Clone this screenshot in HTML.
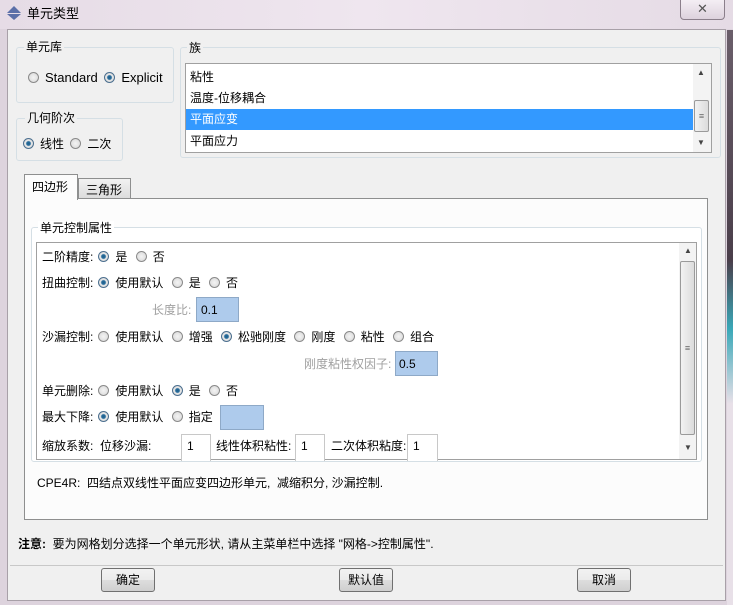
<!DOCTYPE html>
<html><head><meta charset="utf-8"><style>
*{box-sizing:border-box;margin:0;padding:0}
body{width:733px;height:605px;overflow:hidden;background:#ddd3dd;font-family:"Liberation Sans","Noto Sans CJK SC",sans-serif;font-size:12px;color:#000;position:relative}
.a{position:absolute;white-space:nowrap}
.t{position:absolute;white-space:nowrap;line-height:14px}
.r{display:inline-block;width:11px;height:11px;border-radius:50%;border:1px solid #8a8a8a;background:radial-gradient(circle,#f4f4f4 0,#d6d6d6 100%);vertical-align:-1px;margin-right:6px}
.r.on{background:radial-gradient(circle,#1d5f8c 0,#2a6d9c 30%,#e8e8e8 45%,#cfcfcf 100%);border-color:#4b6f8f}
.f{margin-left:5px}
.n{margin-left:5px}
.grp{position:absolute;border:1px solid #d5dfe5;border-radius:3px}
.lbl{position:absolute;background:#f0f0f0;padding:0 2px;line-height:14px}
.box{position:absolute;background:#aecbec;border:1px solid #8ea9c7}
.wbox{position:absolute;background:#fff;border:1px solid #c8c8c8}
.btn{position:absolute;height:24px;border:1px solid #707070;border-radius:3px;background:linear-gradient(#f2f2f2,#ebebeb 50%,#dddddd 51%,#cfcfcf);text-align:center;line-height:22px}
.gray{color:#a0a0a0}
</style></head><body>
<div class="a" style="left:0;top:0;width:733px;height:29px;background:linear-gradient(90deg,#e6dce6,#efe6ef 50%,#e5dbe5)"></div>
<svg class="a" style="left:6px;top:5px" width="16" height="16"><polygon points="8,1 15,8 1,8" fill="#5b6fa8"/><polygon points="8,15 15,9 1,9" fill="#5b6fa8"/></svg>
<div class="t" style="left:27px;top:7px;font-size:13px">单元类型</div>
<div class="a" style="left:680px;top:-1px;width:45px;height:21px;border:1px solid #8b7f8b;border-radius:0 0 4px 4px;background:linear-gradient(#f4eef4,#ddd2dd);text-align:center;line-height:18px;color:#555;font-size:13px">✕</div>
<div class="a" style="left:727px;top:30px;width:6px;height:575px;background:linear-gradient(#6a5e6a,#4a3e4a 40%,#3aa8b8 52%,#e8e0e8 65%)"></div>
<div class="a" style="left:7px;top:29px;width:719px;height:572px;background:#f0f0f0;border:1px solid #a8a0a8"></div>

<div class="grp" style="left:16px;top:47px;width:158px;height:56px"></div>
<div class="lbl" style="left:24px;top:40px">单元库</div>
<div class="t" style="left:28px;top:71px;font-size:13px"><span class="r"></span>Standard <span class="r on" style="margin-left:3px"></span>Explicit</div>
<div class="grp" style="left:16px;top:118px;width:107px;height:43px"></div>
<div class="lbl" style="left:25px;top:111px">几何阶次</div>
<div class="t" style="left:23px;top:137px"><span class="r on"></span>线性 <span class="r" style="margin-left:3px"></span>二次</div>
<div class="grp" style="left:180px;top:47px;width:541px;height:111px"></div>
<div class="lbl" style="left:187px;top:41px">族</div>
<div class="a" style="left:185px;top:63px;width:527px;height:90px;background:#fff;border:1px solid #a0a0a0"></div>
<div class="t" style="left:190px;top:70px">粘性</div>
<div class="t" style="left:190px;top:91px">温度-位移耦合</div>
<div class="a" style="left:186px;top:109px;width:507px;height:21px;background:#3399ff"></div>
<div class="t" style="left:190px;top:112px;color:#fff">平面应变</div>
<div class="t" style="left:190px;top:134px">平面应力</div>
<div class="a" style="left:693px;top:64px;width:18px;height:88px;background:#f3f3f3"></div>
<div class="a" style="left:694px;top:100px;width:15px;height:32px;border:1px solid #9a9a9a;border-radius:2px;background:linear-gradient(90deg,#f2f2f2,#dcdcdc);font-size:9px;text-align:center;line-height:30px;color:#666">≡</div>
<div class="a" style="left:697px;top:68px;font-size:8px;color:#444">▲</div>
<div class="a" style="left:697px;top:138px;font-size:8px;color:#444">▼</div>

<div class="a" style="left:24px;top:198px;width:684px;height:322px;background:#fcfcfc;border:1px solid #8e8f8f"></div>
<div class="a" style="left:78px;top:178px;width:53px;height:21px;border:1px solid #8e8f8f;background:linear-gradient(#f2f2f2,#dcdcdc)"></div>
<div class="t" style="left:86px;top:183px">三角形</div>
<div class="a" style="left:24px;top:174px;width:54px;height:26px;border:1px solid #8e8f8f;border-bottom:none;background:#fcfcfc"></div>
<div class="t" style="left:32px;top:180px">四边形</div>

<div class="grp" style="left:31px;top:227px;width:671px;height:235px;background:#fff"></div>
<div class="lbl" style="left:38px;top:221px;background:#fff">单元控制属性</div>
<div class="a" style="left:36px;top:242px;width:661px;height:218px;border:1px solid #a0a0a0;background:#fff"></div>
<div class="a" style="left:679px;top:243px;width:17px;height:216px;background:#f3f3f3"></div>
<div class="a" style="left:680px;top:261px;width:15px;height:174px;border:1px solid #9a9a9a;border-radius:2px;background:linear-gradient(90deg,#f2f2f2,#dcdcdc);font-size:9px;text-align:center;line-height:172px;color:#666">≡</div>
<div class="a" style="left:684px;top:246px;font-size:8px;color:#444">▲</div>
<div class="a" style="left:684px;top:443px;font-size:8px;color:#444">▼</div>

<div class="t" style="left:42px;top:250px">二阶精度:<span class="r on f"></span>是 <span class="r n"></span>否</div>
<div class="t" style="left:42px;top:276px">扭曲控制:<span class="r on f"></span>使用默认 <span class="r n"></span>是 <span class="r n"></span>否</div>
<div class="t gray" style="left:152px;top:303px">长度比:</div>
<div class="box" style="left:196px;top:297px;width:43px;height:25px"></div>
<div class="t" style="left:201px;top:303px">0.1</div>
<div class="t" style="left:42px;top:330px">沙漏控制:<span class="r f"></span>使用默认 <span class="r n"></span>增强 <span class="r on n"></span>松驰刚度 <span class="r n"></span>刚度 <span class="r n"></span>粘性 <span class="r n"></span>组合</div>
<div class="t gray" style="left:304px;top:357px">刚度粘性权因子:</div>
<div class="box" style="left:395px;top:351px;width:43px;height:25px"></div>
<div class="t" style="left:399px;top:357px">0.5</div>
<div class="t" style="left:42px;top:384px">单元删除:<span class="r f"></span>使用默认 <span class="r on n"></span>是 <span class="r n"></span>否</div>
<div class="t" style="left:42px;top:410px">最大下降:<span class="r on f"></span>使用默认 <span class="r n"></span>指定</div>
<div class="box" style="left:220px;top:405px;width:44px;height:25px"></div>
<div class="t" style="left:42px;top:439px">缩放系数: &nbsp;位移沙漏:</div>
<div class="wbox" style="left:181px;top:434px;width:30px;height:27px;border-bottom:none"></div>
<div class="t" style="left:187px;top:439px">1</div>
<div class="t" style="left:216px;top:439px">线性体积粘性:</div>
<div class="wbox" style="left:295px;top:434px;width:30px;height:27px;border-bottom:none"></div>
<div class="t" style="left:301px;top:439px">1</div>
<div class="t" style="left:331px;top:439px">二次体积粘度:</div>
<div class="wbox" style="left:407px;top:434px;width:31px;height:27px;border-bottom:none"></div>
<div class="t" style="left:413px;top:439px">1</div>

<div class="t" style="left:37px;top:476px">CPE4R: &nbsp;四结点双线性平面应变四边形单元, &nbsp;减缩积分, 沙漏控制.</div>
<div class="t" style="left:18px;top:537px"><b>注意:</b> &nbsp;要为网格划分选择一个单元形状, 请从主菜单栏中选择 "网格-&gt;控制属性".</div>
<div class="a" style="left:10px;top:565px;width:713px;height:1px;background:#c8c8c8"></div>
<div class="btn" style="left:101px;top:568px;width:54px">确定</div>
<div class="btn" style="left:339px;top:568px;width:54px">默认值</div>
<div class="btn" style="left:577px;top:568px;width:54px">取消</div>
</body></html>
